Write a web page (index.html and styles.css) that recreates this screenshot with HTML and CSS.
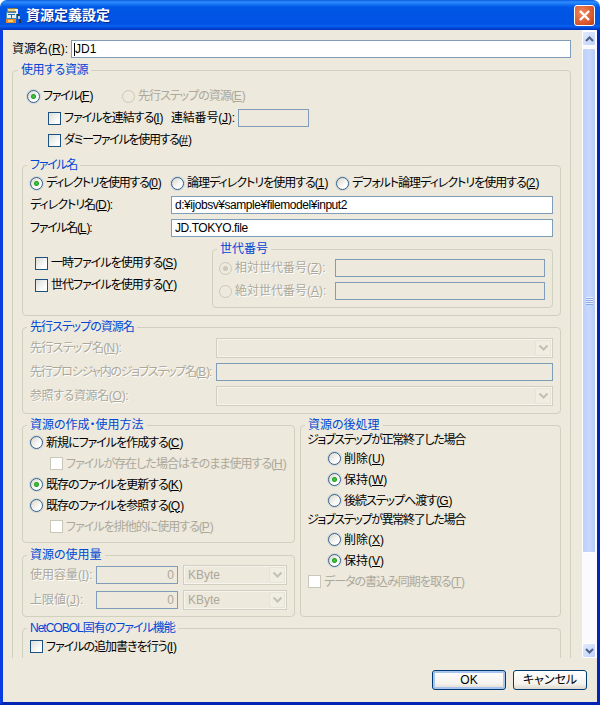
FILE: index.html
```html
<!DOCTYPE html>
<html lang="ja">
<head>
    <meta charset="UTF-8">
    <title>資源定義設定</title>
    <link rel="stylesheet" href="styles.css">
</head>
<body>
<div class="window">
    <div class="titlebar">
        <svg class="app-icon" width="17" height="17" viewBox="0 0 17 17" shape-rendering="crispEdges">
            <rect x="2" y="1" width="10" height="4" fill="#8d7f4c"/>
            <rect x="3" y="2" width="8" height="2" fill="#e8d890"/>
            <rect x="1" y="5" width="11" height="7" fill="#3f86c0"/>
            <rect x="2" y="6" width="9" height="5" fill="#e6eef0"/>
            <rect x="3" y="7" width="7" height="1" fill="#2a6a9c"/>
            <rect x="6" y="8" width="1" height="3" fill="#2a6a9c"/>
            <rect x="1" y="12" width="10" height="4" fill="#e8862a"/>
            <rect x="3" y="13" width="5" height="2" fill="#ffd060"/>
            <rect x="10" y="2" width="3" height="2" fill="#f4f4f4"/>
            <rect x="11" y="4" width="2" height="3" fill="#e8e8e8"/>
            <rect x="12" y="7" width="2" height="2" fill="#30343c"/>
            <rect x="13" y="9" width="2" height="3" fill="#c8ccd4"/>
            <rect x="14" y="12" width="2" height="4" fill="#30343c"/>
        </svg>
        <span class="title-text">資源定義設定</span>
        <div class="close-btn">
            <svg width="13" height="13" viewBox="0 0 13 13"><path d="M2 2 L11 11 M11 2 L2 11" stroke="#fff" stroke-width="2.4" fill="none"/></svg>
        </div>
    </div>

    <div class="client">
        <div class="pane">
            <div class="name-row">
                <span class="name-label">資源名(<u>R</u>):</span>
                <div class="field white name-value"><span class="caret"></span>JD1</div>
            </div>

            <fieldset class="group outer">
                <legend class="sp4">使用する資源</legend>
                <div class="row source-row">
                    <label class="opt w95"><input type="radio" name="src" checked><span class="sp13">ファイル(<u>F</u>)</span></label>
                    <label class="opt off"><input type="radio" name="src" disabled><span class="sp10">先行ステップの資源(<u>E</u>)</span></label>
                </div>
                <div class="row concat-row">
                    <label class="opt w123"><input type="checkbox"><span class="sp10">ファイルを連結する(<u>I</u>)</span></label>
                    <span class="concat-label sp2">連結番号(<u>J</u>):</span>
                    <div class="field concat-no"></div>
                </div>
                <div class="row concat-row">
                    <label class="opt"><input type="checkbox"><span class="sp13">ダミーファイルを使用する(<u>#</u>)</span></label>
                </div>

                <fieldset class="group file-group">
                    <legend class="sp13">ファイル名</legend>
                    <div class="row dir-row">
                        <label class="opt w141"><input type="radio" name="dir" checked><span class="sp13">ディレクトリを使用する(<u>0</u>)</span></label>
                        <label class="opt w165"><input type="radio" name="dir"><span class="sp10">論理ディレクトリを使用する(<u>1</u>)</span></label>
                        <label class="opt"><input type="radio" name="dir"><span class="sp10">デフォルト論理ディレクトリを使用する(<u>2</u>)</span></label>
                    </div>
                    <div class="field-row first">
                        <span class="label w141 sp10">ディレクトリ名(<u>D</u>):</span>
                        <div class="field white path-value">d:¥ijobsv¥sample¥filemodel¥input2</div>
                    </div>
                    <div class="field-row">
                        <span class="label w141 sp13">ファイル名(<u>L</u>):</span>
                        <div class="field white path-value">JD.TOKYO.file</div>
                    </div>
                    <div class="file-bottom">
                        <div class="file-flags">
                            <label class="opt flag"><input type="checkbox"><span class="sp10">一時ファイルを使用する(<u>S</u>)</span></label>
                            <label class="opt flag"><input type="checkbox"><span class="sp10">世代ファイルを使用する(<u>Y</u>)</span></label>
                        </div>
                        <fieldset class="group gen-group">
                            <legend>世代番号</legend>
                            <div class="field-row gen-first">
                                <label class="opt off gen-opt"><input type="radio" name="gen" checked disabled><span class="off-text">相対世代番号(<u>Z</u>):</span></label>
                                <div class="field"></div>
                            </div>
                            <div class="field-row">
                                <label class="opt off gen-opt"><input type="radio" name="gen" disabled><span class="off-text">絶対世代番号(<u>A</u>):</span></label>
                                <div class="field"></div>
                            </div>
                        </fieldset>
                    </div>
                </fieldset>

                <fieldset class="group prev-group">
                    <legend class="sp10">先行ステップの資源名</legend>
                    <div class="field-row prev-first">
                        <span class="label off-text w186 sp7">先行ステップ名(<u>N</u>):</span>
                        <div class="combo"><span class="combo-text"></span><span class="combo-btn"><svg width="11" height="8" viewBox="0 0 11 8"><path d="M1.5 1.5 L5.5 5.5 L9.5 1.5" stroke="#c4c2b4" stroke-width="2.2" fill="none"/></svg></span></div>
                    </div>
                    <div class="field-row">
                        <span class="label off-text w186 sp13">先行プロシジャ内のジョブステップ名(<u>B</u>):</span>
                        <div class="field"></div>
                    </div>
                    <div class="field-row">
                        <span class="label off-text w186 sp4">参照する資源名(<u>O</u>):</span>
                        <div class="combo"><span class="combo-text"></span><span class="combo-btn"><svg width="11" height="8" viewBox="0 0 11 8"><path d="M1.5 1.5 L5.5 5.5 L9.5 1.5" stroke="#c4c2b4" stroke-width="2.2" fill="none"/></svg></span></div>
                    </div>
                </fieldset>

                <div class="columns">
                    <div class="col-left">
                        <fieldset class="group create-group">
                            <legend>資源の作成・使用方法</legend>
                            <label class="opt line"><input type="radio" name="mode"><span class="sp10">新規にファイルを作成する(<u>C</u>)</span></label>
                            <label class="opt line sub off"><input type="checkbox" disabled><span class="sp10">ファイルが存在した場合はそのまま使用する(<u>H</u>)</span></label>
                            <label class="opt line"><input type="radio" name="mode" checked><span class="sp10">既存のファイルを更新する(<u>K</u>)</span></label>
                            <label class="opt line"><input type="radio" name="mode"><span class="sp10">既存のファイルを参照する(<u>Q</u>)</span></label>
                            <label class="opt line sub off"><input type="checkbox" disabled><span class="sp10">ファイルを排他的に使用する(<u>P</u>)</span></label>
                        </fieldset>
                        <fieldset class="group usage-group">
                            <legend>資源の使用量</legend>
                            <div class="usage-row first">
                                <span class="label off-text w66">使用容量(<u>I</u>):</span>
                                <div class="field amount">0</div>
                                <div class="combo unit"><span class="combo-text">KByte</span><span class="combo-btn"><svg width="11" height="8" viewBox="0 0 11 8"><path d="M1.5 1.5 L5.5 5.5 L9.5 1.5" stroke="#c4c2b4" stroke-width="2.2" fill="none"/></svg></span></div>
                            </div>
                            <div class="usage-row">
                                <span class="label off-text w66">上限値(<u>J</u>):</span>
                                <div class="field amount">0</div>
                                <div class="combo unit"><span class="combo-text">KByte</span><span class="combo-btn"><svg width="11" height="8" viewBox="0 0 11 8"><path d="M1.5 1.5 L5.5 5.5 L9.5 1.5" stroke="#c4c2b4" stroke-width="2.2" fill="none"/></svg></span></div>
                            </div>
                        </fieldset>
                    </div>
                    <fieldset class="group after-group">
                        <legend>資源の後処理</legend>
                        <div class="after-head sp13">ジョブステップが正常終了した場合</div>
                        <label class="opt line inset"><input type="radio" name="ok"><span>削除(<u>U</u>)</span></label>
                        <label class="opt line inset"><input type="radio" name="ok" checked><span>保持(<u>W</u>)</span></label>
                        <label class="opt line inset"><input type="radio" name="ok"><span class="sp10">後続ステップへ渡す(<u>G</u>)</span></label>
                        <div class="after-head second sp13">ジョブステップが異常終了した場合</div>
                        <label class="opt line inset"><input type="radio" name="ng"><span>削除(<u>X</u>)</span></label>
                        <label class="opt line inset"><input type="radio" name="ng" checked><span>保持(<u>V</u>)</span></label>
                        <label class="opt line off"><input type="checkbox" disabled><span class="sp10">データの書込み同期を取る(<u>T</u>)</span></label>
                    </fieldset>
                </div>

                <fieldset class="group cobol-group">
                    <legend class="sp10">NetCOBOL固有のファイル機能</legend>
                    <label class="opt line"><input type="checkbox"><span class="sp10">ファイルの追加書きを行う(<u>I</u>)</span></label>
                </fieldset>
            </fieldset>
        </div>

        <div class="scrollbar">
            <div class="sb-btn">
                <svg width="9" height="6" viewBox="0 0 9 6"><path d="M1 5 L4.5 1.5 L8 5" stroke="#4d6185" stroke-width="2" fill="none"/></svg>
            </div>
            <div class="sb-thumb">
                <span></span><span></span><span></span><span></span>
            </div>
            <div class="sb-btn down">
                <svg width="9" height="6" viewBox="0 0 9 6"><path d="M1 1 L4.5 4.5 L8 1" stroke="#4d6185" stroke-width="2" fill="none"/></svg>
            </div>
        </div>
    </div>

    <div class="footer">
        <div class="btn default">OK</div>
        <div class="btn">キャンセル</div>
    </div>
</div>
</body>
</html>
```

FILE: styles.css
```css
* {
    box-sizing: border-box;
}
html, body {
    margin: 0;
    padding: 0;
    background: #fff;
}
body {
    font-family: "Liberation Sans", "Noto Sans CJK JP", sans-serif;
    font-size: 12px;
    line-height: 14px;
    color: #000;
    font-feature-settings: "palt";
}
u {
    letter-spacing: 0;
}
.window {
    width: 600px;
    height: 705px;
    display: flex;
    flex-direction: column;
    background: #ede9dd;
    border-radius: 7px 7px 0 0;
    overflow: hidden;
}

/* tracking, the dialog font sets kana narrower than ours */
.sp2 { letter-spacing: -0.2px; }
.sp4 { letter-spacing: -0.4px; }
.sp7 { letter-spacing: -0.7px; }
.sp10 { letter-spacing: -1px; }
.sp13 { letter-spacing: -1.3px; }

/* title bar */
.titlebar {
    height: 30px;
    flex: none;
    display: flex;
    align-items: center;
    padding: 0 5px 0 5px;
    background: linear-gradient(to bottom, #0a5be0 0, #2f8dff 2px, #1a78f5 4px, #0058e8 7px, #0054e3 14px, #0055e6 20px, #0052e0 24px, #0a62f0 26px, #0047d8 28px, #0033b8 30px);
}
.app-icon {
    flex: none;
}
.title-text {
    margin-left: 4px;
    font-size: 14px;
    font-weight: bold;
    color: #fff;
    font-feature-settings: normal;
    text-shadow: 1px 1px 0 #0a2a90;
}
.close-btn {
    margin-left: auto;
    margin-right: 0;
    width: 21px;
    height: 21px;
    display: flex;
    align-items: center;
    justify-content: center;
    border: 1px solid #fff;
    border-radius: 3px;
    background: radial-gradient(circle at 35% 35%, #ef8a5c, #dc5a30 60%, #c03a14);
}

/* main area */
.client {
    height: 628px;
    flex: none;
    display: flex;
    border-left: 3px solid #0a3ce0;
    border-right: 3px solid #0425b4;
}
.pane {
    width: 579px;
    height: 628px;
    flex: none;
    overflow: hidden;
    padding: 10px 0 0 9px;
}
.name-row {
    display: flex;
    align-items: center;
    height: 18px;
    width: 559px;
}
.name-label {
    width: 59px;
    flex: none;
}
.field {
    flex: 1;
    height: 18px;
    border: 1px solid #7f9db9;
    padding-left: 2px;
    line-height: 16px;
    min-width: 0;
    white-space: nowrap;
}
.field.white {
    background: #fff;
}
.name-value {
    display: flex;
    align-items: center;
}
.caret {
    width: 1px;
    height: 13px;
    background: #000;
}
.path-value {
    padding-left: 3px;
    letter-spacing: -0.45px;
}

/* group boxes */
.group {
    margin: 0;
    padding: 0 7px;
    min-width: 0;
    border: 1px solid #d0d0bf;
    border-radius: 4px;
}
.group legend {
    padding: 0 3px;
    margin-left: -3px;
    line-height: 14px;
    color: #0046d5;
    white-space: nowrap;
}
.outer {
    width: 559px;
    margin-top: 5px;
    padding: 0 9px 20px;
}
.outer > legend {
    margin-left: -4px;
}
.row {
    display: flex;
    align-items: center;
}
.source-row {
    height: 22px;
    margin-top: 8px;
    padding-left: 5px;
}
.concat-row {
    height: 22px;
    padding-left: 26px;
}
.opt {
    display: flex;
    align-items: center;
    gap: 3px;
    white-space: nowrap;
    flex: none;
}
.opt.off {
    color: #aca899;
}
.w95 { width: 95px; }
.w123 { width: 123px; }
.w141 { width: 141px; }
.w165 { width: 165px; }
.w186 { width: 186px; }
.w66 { width: 66px; }
.concat-label {
    width: 67px;
    flex: none;
}
.concat-no {
    flex: none;
    width: 71px;
}

/* radio and check */
input[type="radio"], input[type="checkbox"] {
    appearance: none;
    margin: 0;
    width: 13px;
    height: 13px;
    flex: none;
}
input[type="radio"] {
    border-radius: 50%;
    border: 1px solid #2f5f8f;
    background: linear-gradient(135deg, #d8d4c8, #fff 70%);
    box-shadow: 0 0 0 1px rgba(140, 170, 200, 0.25);
}
input[type="radio"]:checked {
    background: radial-gradient(circle at 50% 50%, #4fd24f 0, #21a121 2px, transparent 3px), linear-gradient(135deg, #d8d4c8, #fff 70%);
}
input[type="radio"]:disabled {
    border-color: #cac8bb;
    background: #ede9dd;
    box-shadow: none;
}
input[type="radio"]:disabled:checked {
    background: radial-gradient(circle at 50% 50%, #cac8bb 0, #cac8bb 2px, transparent 3px), #ede9dd;
}
input[type="checkbox"] {
    border: 1px solid #1c5180;
    background: linear-gradient(135deg, #dcdcd7, #fff 80%);
}
input[type="checkbox"]:disabled {
    border-color: #cac8bb;
    background: #fff;
}

/* file name */
.file-group {
    margin-top: 7px;
    padding-bottom: 7px;
}
.dir-row {
    height: 20px;
    margin-top: 1px;
}
.field-row {
    display: flex;
    align-items: center;
    margin-top: 5px;
}
.field-row.first {
    margin-top: 3px;
}
.label {
    flex: none;
    white-space: nowrap;
}
.off-text {
    color: #aca899;
    text-shadow: 1px 1px 0 #fff;
}
.file-bottom {
    display: flex;
    margin-top: 5px;
}
.file-flags {
    width: 182px;
    flex: none;
    padding: 10px 0 0 5px;
}
.flag {
    height: 22px;
}
.gen-group {
    flex: 1;
    padding-bottom: 7px;
}
.gen-first {
    margin-top: 3px;
}
.gen-opt {
    width: 116px;
    margin-left: -1px;
}

/* previous step */
.prev-group {
    margin-top: 4px;
    padding-bottom: 7px;
}
.prev-first {
    margin-top: 4px;
}
.combo {
    flex: 1;
    height: 20px;
    min-width: 0;
    display: flex;
    align-items: center;
    border: 1px solid #d0cfc2;
    box-shadow: inset 0 0 0 1px #f6f4ec;
    color: #aca899;
    padding: 1px;
}
.combo-text {
    flex: 1;
    padding-left: 3px;
    line-height: 16px;
}
.combo-btn {
    width: 16px;
    height: 16px;
    flex: none;
    display: flex;
    align-items: center;
    justify-content: center;
    background: #f0ede2;
    border: 1px solid #e6e3d7;
    border-radius: 2px;
}

/* two columns */
.columns {
    display: flex;
    gap: 5px;
    margin-top: 4px;
}
.col-left {
    width: 273px;
    flex: none;
}
.create-group {
    padding-bottom: 5px;
}
.line {
    height: 21px;
}
.sub {
    padding-left: 20px;
}
.usage-group {
    margin-top: 5px;
    padding-bottom: 6px;
}
.usage-row {
    display: flex;
    align-items: center;
    height: 20px;
    margin-top: 5px;
}
.usage-row.first {
    margin-top: 3px;
}
.amount {
    flex: none;
    width: 82px;
    text-align: right;
    padding-right: 3px;
    color: #aca899;
}
.unit {
    flex: none;
    width: 104px;
    margin-left: 5px;
}
.after-group {
    flex: 1;
}
.after-head {
    height: 16px;
    line-height: 16px;
    margin-left: -1px;
    white-space: nowrap;
}
.after-head.second {
    margin-top: 1px;
    margin-bottom: 1px;
}
.inset {
    padding-left: 20px;
}
.cobol-group {
    margin-top: 4px;
    padding-bottom: 10px;
}
.cobol-group .line {
    margin-top: 1px;
}

/* scrollbar */
.scrollbar {
    width: 15px;
    flex: none;
    display: flex;
    flex-direction: column;
    background: #fbfbfd;
    padding: 1px 1px 0 0;
}
.sb-btn {
    height: 15px;
    flex: none;
    display: flex;
    align-items: center;
    justify-content: center;
    border: 1px solid #fff;
    border-radius: 2px;
    background: linear-gradient(135deg, #e1eafe, #c1d3fb);
}
.sb-btn.down {
    margin-top: auto;
}
.sb-thumb {
    height: 505px;
    flex: none;
    margin-top: 2px;
    display: flex;
    flex-direction: column;
    align-items: center;
    justify-content: center;
    gap: 1px;
    border: 1px solid #fff;
    border-radius: 2px;
    background: linear-gradient(to right, #bdd0fb, #c9d8fc 50%, #b8cbf8);
}
.sb-thumb span {
    width: 7px;
    height: 1px;
    background: #e8effe;
    box-shadow: 0 1px 0 #8faade;
}

/* buttons */
.footer {
    height: 47px;
    flex: none;
    display: flex;
    justify-content: flex-end;
    gap: 7px;
    padding: 12px 10px 0 0;
    border-left: 3px solid #0a3ce0;
    border-right: 3px solid #0425b4;
    border-bottom: 3px solid #0425b4;
}
.btn {
    width: 74px;
    height: 20px;
    display: flex;
    align-items: center;
    justify-content: center;
    border: 1px solid #003c74;
    border-radius: 3px;
    background: linear-gradient(to bottom, #fff, #f4f3ee 70%, #dcd8ce);
}
.btn.default {
    box-shadow: inset 0 0 0 2px #a9c4ee;
}
```
